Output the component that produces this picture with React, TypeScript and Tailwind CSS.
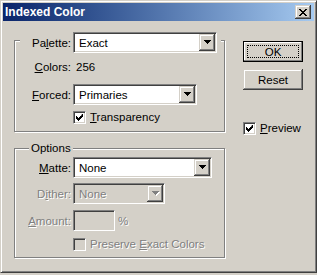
import type { ReactNode } from 'react';

const raised =
  'bg-[#d4d0c8] shadow-[inset_-1px_-1px_0_#404040,inset_1px_1px_0_#d4d0c8,inset_-2px_-2px_0_#808080,inset_2px_2px_0_#fff]';
const sunken =
  'border border-t-[#808080] border-l-[#808080] border-b-white border-r-white shadow-[inset_1px_1px_0_#404040,inset_-1px_-1px_0_#d4d0c8]';
const grayed = 'text-[#808080] [text-shadow:1px_1px_0_#fff]';

function Arrow({ disabled }: { disabled?: boolean }) {
  return (
    <svg width="8" height="5" viewBox="0 0 8 5">
      {disabled && <path d="M1 1h7v1h-1v1h-1v1h-1v1h-1v-1h-1v-1h-1v-1h-1z" fill="#fff" />}
      <path d="M0 0h7v1h-1v1h-1v1h-1v1h-1v-1h-1v-1h-1v-1h-1z" fill={disabled ? '#808080' : '#000'} />
    </svg>
  );
}

function Select({ value, className, disabled }: { value: string; className: string; disabled?: boolean }) {
  return (
    <div className={`flex h-[21px] p-[1px] ${sunken} ${disabled ? 'bg-[#d4d0c8]' : 'bg-white'} ${className}`}>
      <span className={`flex-1 self-center pl-[4px] ${disabled ? grayed : ''}`}>{value}</span>
      <div className={`flex h-[17px] w-[16px] items-center justify-center pl-[1px] ${raised}`}>
        <Arrow disabled={disabled} />
      </div>
    </div>
  );
}

function Check({ checked, disabled }: { checked?: boolean; disabled?: boolean }) {
  return (
    <div
      className={`flex h-[13px] w-[13px] shrink-0 items-center justify-center ${sunken} ${
        disabled ? 'bg-[#d4d0c8]' : 'bg-white'
      }`}
    >
      {checked && (
        <svg width="7" height="7" viewBox="0 0 7 7">
          <path d="M6 0h1v3h-1v1h-1v1h-1v1h-1v1h-1v-1h-1v-1h-1v-3h1v1h1v1h1v-1h1v-1h1z" fill="#000" />
        </svg>
      )}
    </div>
  );
}

function Label({ children, disabled }: { children: ReactNode; disabled?: boolean }) {
  return <span className={`w-[51px] text-right ${disabled ? grayed : ''}`}>{children}</span>;
}

export default function App() {
  return (
    <div className="h-[275px] w-[317px] bg-[#d4d0c8] font-['Liberation_Sans',Arial,sans-serif] text-[11.5px] leading-[14px] text-black">
      <div className="h-[273px] w-[317px] border border-t-[#d4d0c8] border-l-[#d4d0c8] border-r-[#404040] border-b-[#404040] bg-[#d4d0c8] p-[2px] shadow-[inset_1px_1px_0_#fff,inset_-1px_-1px_0_#808080]">
        {/* title bar */}
        <div className="flex h-[18px] items-center justify-between bg-linear-to-r from-[#0a246a] to-[#a6caf0]">
          <span className="pl-[2px] text-[12px] font-bold text-white">Indexed Color</span>
          <div className={`mr-[3px] flex h-[14px] w-[16px] items-center justify-center ${raised}`}>
            <svg width="8" height="7" viewBox="0 0 8 7">
              <path
                d="M0 0h2v1h1v1h2v-1h1v-1h2v1h-1v1h-1v1h-1v1h1v1h1v1h1v1h-2v-1h-1v-1h-2v1h-1v1h-2v-1h1v-1h1v-1h1v-1h-1v-1h-1v-1h-1z"
                fill="#000"
              />
            </svg>
          </div>
        </div>

        <div className="flex pl-[11px]">
          {/* left column */}
          <div className="w-[212px]">
            <div className="mt-[19px] flex h-[92px] w-[211px] flex-col border border-[#808080] shadow-[1px_1px_0_#fff,inset_1px_1px_0_#fff]">
              <div className="-mt-[9px] ml-[5px] flex h-[21px] w-fit items-center bg-[#d4d0c8] pr-[4px]">
                <Label>
                  Pa<u>l</u>ette:
                </Label>
                <Select value="Exact" className="ml-[2px] w-[144px]" />
              </div>
              <div className="ml-[5px] mt-[7px] flex h-[14px] items-center">
                <Label>
                  <u>C</u>olors:
                </Label>
                <span className="ml-[5px]">256</span>
              </div>
              <div className="ml-[5px] mt-[10px] flex items-center">
                <Label>
                  <u>F</u>orced:
                </Label>
                <Select value="Primaries" className="ml-[2px] w-[124px]" />
              </div>
              <div className="ml-[58px] mt-[5px] flex items-center">
                <Check checked />
                <span className="ml-[4px]">
                  <u>T</u>ransparency
                </span>
              </div>
            </div>

            <div className="mt-[16px] flex h-[110px] w-[211px] flex-col border border-[#808080] shadow-[1px_1px_0_#fff,inset_1px_1px_0_#fff]">
              <div className="-mt-[8px] ml-[14px] flex h-[14px] w-fit items-center bg-[#d4d0c8] px-[2px]">Options</div>
              <div className="ml-[5px] mt-[2px] flex items-center">
                <Label>
                  <u>M</u>atte:
                </Label>
                <Select value="None" className="ml-[2px] w-[139px]" />
              </div>
              <div className="ml-[5px] mt-[5px] flex items-center">
                <Label disabled>
                  D<u>i</u>ther:
                </Label>
                <Select value="None" className="ml-[2px] w-[92px]" disabled />
              </div>
              <div className="ml-[5px] mt-[6px] flex items-center">
                <Label disabled>
                  <u>A</u>mount:
                </Label>
                <div className={`ml-[2px] h-[21px] w-[42px] bg-[#d4d0c8] ${sunken}`} />
                <span className={`ml-[3px] ${grayed}`}>%</span>
              </div>
              <div className="ml-[58px] mt-[6px] flex items-center">
                <Check disabled />
                <span className={`ml-[4px] ${grayed}`}>
                  Preserve <u>E</u>xact Colors
                </span>
              </div>
            </div>
          </div>

          {/* right column */}
          <div className="ml-[17px] mt-[20px] flex w-[60px] flex-col">
            <div className="h-[21px] w-[60px] border border-black">
              <div className="flex h-full w-full bg-[#d4d0c8] p-[3px] shadow-[inset_-1px_-1px_0_#808080,inset_1px_1px_0_#fff]">
                <div className="flex flex-1 items-center justify-center border border-dotted border-black">OK</div>
              </div>
            </div>
            <div className={`mt-[7px] flex h-[21px] w-[60px] items-center justify-center ${raised}`}>Reset</div>
            <div className="mt-[31px] flex items-center">
              <Check checked />
              <span className="ml-[4px]">
                <u>P</u>review
              </span>
            </div>
          </div>
        </div>
      </div>
    </div>
  );
}
